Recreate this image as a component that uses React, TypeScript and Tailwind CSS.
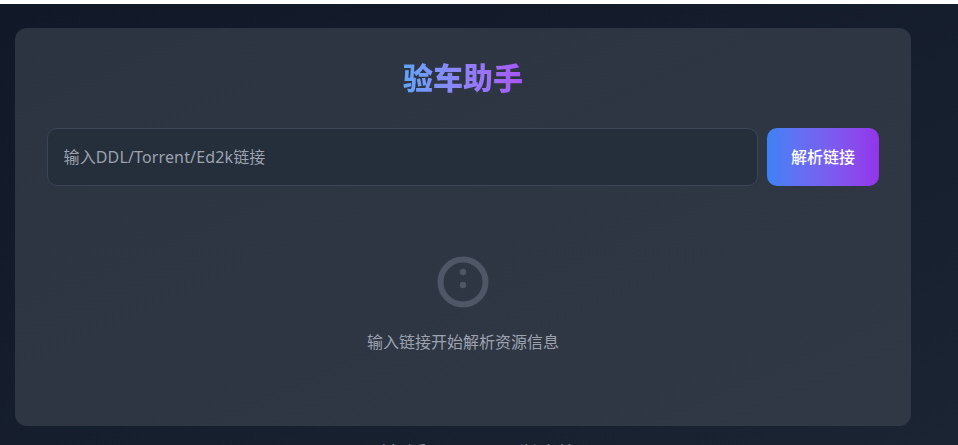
const font = "font-['Noto_Sans','Noto_Sans_CJK_SC',sans-serif]";

export default function App() {
  return (
    <div className={`h-[445px] overflow-hidden bg-white pt-[4px] ${font}`}>
      <div className="h-[441px] overflow-hidden bg-gradient-to-br from-[#111827] to-[#1a2433] pl-[15px] pt-[24px]">
        <div className="h-[398px] w-[896px] rounded-xl bg-gradient-to-br from-[#2c3341] to-[#313845] px-8 pt-8">
          <h1 className="mx-auto w-fit bg-gradient-to-r from-[#60a5fa] to-[#a855f7] bg-clip-text text-center text-[30px] leading-9 font-black text-transparent">
            验车助手
          </h1>
          <div className="mt-[32px] flex gap-[9px]">
            <input
              readOnly
              placeholder="输入DDL/Torrent/Ed2k链接"
              className="h-[58px] min-w-0 flex-1 rounded-[10px] border border-[#3a4556] bg-[#252e3b] pl-[15.5px] pr-4 text-base tracking-[0.14px] text-white outline-none placeholder:text-[#9ca3af]"
            />
            <button className="h-[58px] w-[112px] shrink-0 rounded-[10px] bg-gradient-to-r from-[#3b82f6] to-[#9333ea] text-base font-medium text-white">
              解析链接
            </button>
          </div>
          <div className="mt-[70px] flex flex-col items-center">
            <svg viewBox="0 0 52 52" className="h-[52px] w-[52px]" fill="none">
              <circle cx="26" cy="26" r="22.5" stroke="#4f5665" strokeWidth="6" />
              <circle cx="26" cy="16" r="3.2" fill="#4f5665" />
              <circle cx="26" cy="29" r="3.2" fill="#4f5665" />
            </svg>
            <p className="mt-[22px] text-base leading-6 text-[#9ca3af]">输入链接开始解析资源信息</p>
          </div>
        </div>
        <p className="ml-[360px] mt-[14px] text-[13px] leading-5 whitespace-nowrap text-[#9ca3af]">验车助手工具 Copyright 资源解析器</p>
      </div>
    </div>
  );
}
